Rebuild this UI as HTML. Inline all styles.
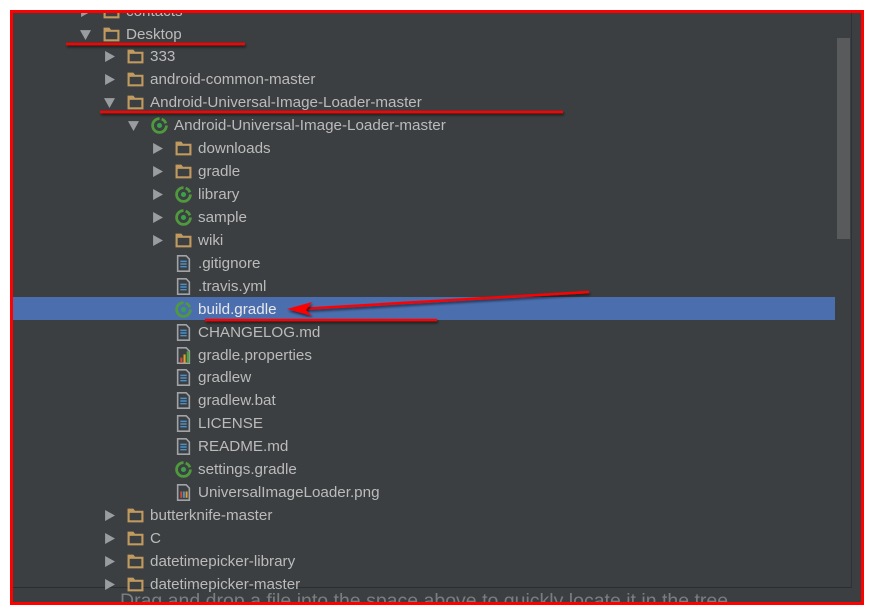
<!DOCTYPE html>
<html><head><meta charset="utf-8"><style>
html,body{margin:0;padding:0;background:#fff;width:875px;height:614px;overflow:hidden;font-family:"Liberation Sans",sans-serif}
#panel{position:absolute;left:11px;top:11px;width:852px;height:593px;background:#3c3f41;overflow:hidden}
.row{position:absolute;height:23px;line-height:23px;font-size:15.2px;color:#bbbbbb;white-space:nowrap}
.row svg{position:absolute;top:4px}
.sel{position:absolute;left:2px;top:286px;width:822px;height:23px;background:#4b6eaf}
</style></head><body>
<svg width="0" height="0" style="position:absolute">
<defs>
<symbol id="fold" viewBox="0 0 16 16"><path d="M0.5 1.5h5.5l1.5 2H15.5v11H0.5z" fill="#c09a5e"/><rect x="2.5" y="5.5" width="11" height="7" fill="#3c3f41"/></symbol>
<symbol id="mod" viewBox="0 0 16 16"><path d="M8 1.5A6.5 6.5 0 1 0 14.5 8" fill="none" stroke="#4f9a3d" stroke-width="2.6"/><path d="M10 2A6.5 6.5 0 0 1 14 6" fill="none" stroke="#4f9a3d" stroke-width="2.6"/><circle cx="8" cy="8" r="2.4" fill="#3aa04a"/></symbol>
<symbol id="file" viewBox="0 0 16 16"><path d="M2.5 0.8h8l3 3v11.4h-11z" fill="#3c3f41" stroke="#a0a4a8" stroke-width="1.5"/><path d="M5 6h6M5 8.5h6M5 11h6" stroke="#4a90c9" stroke-width="1.4"/></symbol>
<symbol id="prop" viewBox="0 0 16 16"><path d="M2.5 0.8h8l3 3v11.4h-11z" fill="#3c3f41" stroke="#a0a4a8" stroke-width="1.5"/><rect x="5" y="10" width="2" height="5" fill="#d04a3a"/><rect x="8" y="7" width="2" height="8" fill="#e0a030"/><rect x="11" y="4" width="2.5" height="11" fill="#4fa040"/></symbol>
<symbol id="img" viewBox="0 0 16 16"><path d="M2.5 0.8h8l3 3v11.4h-11z" fill="#3c3f41" stroke="#a0a4a8" stroke-width="1.5"/><rect x="5" y="7" width="1.8" height="6" fill="#d04a3a"/><rect x="7.5" y="7" width="1.8" height="6" fill="#4a90c9"/><rect x="10" y="7" width="1.8" height="6" fill="#e0a030"/></symbol>
<symbol id="right" viewBox="0 0 10 10"><path d="M1 0L10 5L1 10z" fill="#9a9d9f"/></symbol>
<symbol id="down" viewBox="0 0 10 10"><path d="M0 1L10 1L5 10z" fill="#9a9d9f"/></symbol>
</defs></svg>
<div id="panel">
<div class="sel"></div>
<div style="position:absolute;left:826px;top:27px;width:13px;height:201px;background:#585a5c"></div>
<div style="position:absolute;left:840px;top:0;width:1px;height:577px;background:#2f3133"></div>
<div style="position:absolute;left:0;top:576px;width:840px;height:1px;background:#2b2d2f"></div>
</div>
<script>
var R=[
[-1,'r','fold','contacts'],
[0,'d','fold','Desktop'],[1,'r','fold','333'],[1,'r','fold','android-common-master'],[1,'d','fold','Android-Universal-Image-Loader-master'],
[2,'d','mod','Android-Universal-Image-Loader-master'],[3,'r','fold','downloads'],[3,'r','fold','gradle'],[3,'r','mod','library'],[3,'r','mod','sample'],[3,'r','fold','wiki'],
[3,'','file','.gitignore'],[3,'','file','.travis.yml'],[3,'','mod','build.gradle'],[3,'','file','CHANGELOG.md'],[3,'','prop','gradle.properties'],[3,'','file','gradlew'],[3,'','file','gradlew.bat'],[3,'','file','LICENSE'],[3,'','file','README.md'],[3,'','mod','settings.gradle'],[3,'','img','UniversalImageLoader.png'],
[1,'r','fold','butterknife-master'],[1,'r','fold','C'],[1,'r','fold','datetimepicker-library'],[1,'r','fold','datetimepicker-master']];
var p=document.getElementById('panel'),h='';
R.forEach(function(r,j){var i=j-1,top=22.5+i*22.93-11,x=(r[0]<0?0:r[0])*24;
h+='<div class="row" style="left:0;top:'+(top).toFixed(1)+'px;width:800px;">';
if(r[1])h+='<svg style="left:'+(69+x)+'px;top:6px" width="11" height="11"><use href="#'+(r[1]=='d'?'down':'right')+'" width="11" height="11"/></svg>';
h+='<svg style="left:'+(92+x)+'px;top:3px" width="17" height="17"><use href="#'+r[2]+'" width="17" height="17"/></svg><span style="position:absolute;left:'+(115+x)+'px;'+(i==12?'color:#e8e8e8':'')+'">'+r[3]+'</span></div>';});
h+='<div class="row" style="left:109px;top:577px;color:#7b7e80;font-size:19.5px;line-height:26px;height:26px">Drag and drop a file into the space above to quickly locate it in the tree.</div>';
p.insertAdjacentHTML('beforeend',h);
</script>
<svg style="position:absolute;left:0;top:0" width="875" height="614">
<defs><filter id="sh"><feDropShadow dx="1" dy="2" stdDeviation="1.2" flood-color="#000" flood-opacity="0.6"/></filter></defs>
<g filter="url(#sh)" fill="none" stroke="#f00" stroke-width="2.5">
<path d="M66 44H245"/><path d="M100 112H563"/><path d="M589 292L300 309"/><path d="M205 320H437"/>
</g>
<path filter="url(#sh)" d="M287 309L312 302L306 310L312 316z" fill="#f00"/>
<rect x="11.5" y="11.5" width="851" height="592" fill="none" stroke="#f00" stroke-width="3"/>
</svg>
</body></html>
